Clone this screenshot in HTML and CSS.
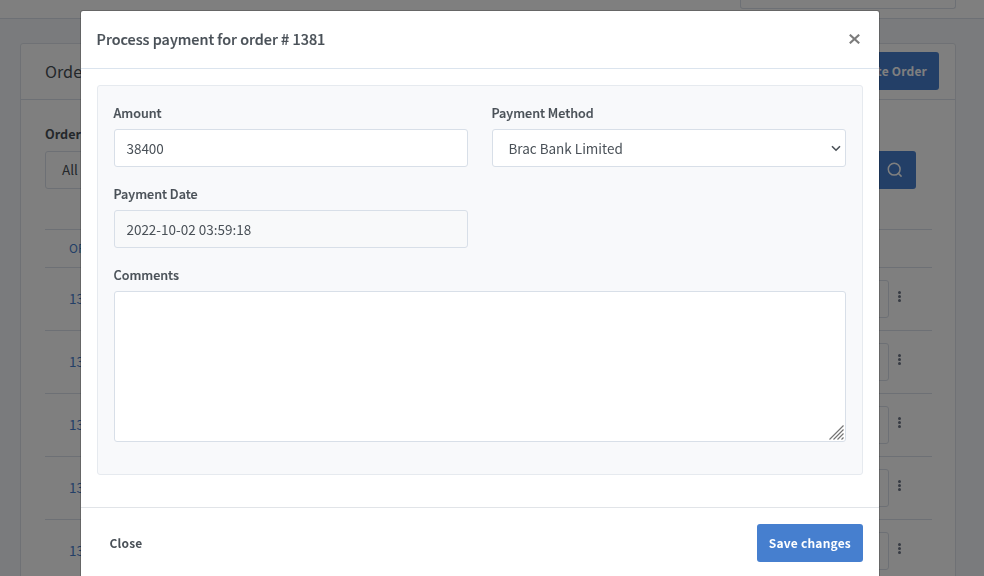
FILE: index.html
```html
<!DOCTYPE html>
<html lang="en">
<head>
<meta charset="utf-8">
<title>Orders</title>
<link rel="stylesheet" href="styles.css">
</head>
<body>
<div class="page">
  <header class="topbar"><div class="topbar-search"></div></header>
  <main class="card">
    <div class="card-header"><h3 class="card-title">Orders</h3><button class="btn btn-primary create">Create Order</button></div>
    <div class="card-body">
      <div class="filter-label">Order Status</div>
      <div class="filters">
        <div class="filter-select">All</div>
        <button class="btn btn-primary search" aria-label="Search"><svg width="16" height="16" viewBox="0 0 16 16" fill="none" stroke="currentColor" stroke-width="1.5" stroke-linecap="round"><circle cx="7.2" cy="7.2" r="5.9"/><path d="M11.5 11.5l2.6 2.6"/></svg></button>
      </div>
      <div class="table">
        <div class="table-head">ORDER</div>
        <div class="row"><a>1381</a><span class="row-btn"></span><span class="dots"><i></i><i></i><i></i></span></div>
        <div class="row"><a>1380</a><span class="row-btn"></span><span class="dots"><i></i><i></i><i></i></span></div>
        <div class="row"><a>1379</a><span class="row-btn"></span><span class="dots"><i></i><i></i><i></i></span></div>
        <div class="row"><a>1378</a><span class="row-btn"></span><span class="dots"><i></i><i></i><i></i></span></div>
        <div class="row"><a>1377</a><span class="row-btn"></span><span class="dots"><i></i><i></i><i></i></span></div>
      </div>
    </div>
  </main>
</div>
<div class="backdrop">
  <div class="modal">
    <div class="modal-header">
      <h5 class="modal-title">Process payment for order # 1381</h5>
      <button class="modal-close" aria-label="Close"><svg width="11" height="10" viewBox="0 0 11 10" fill="none" stroke="currentColor" stroke-width="2.1"><path d="M.8.7l9.4 8.6M10.2.7L.8 9.3"/></svg></button>
    </div>
    <div class="modal-body">
      <div class="fieldset">
        <div class="group"><label>Amount</label><div class="control">38400</div></div>
        <div class="group"><label>Payment Method</label><div class="control select"><span>Brac Bank Limited</span><svg width="10" height="7" viewBox="0 0 10 7" fill="none" stroke="currentColor" stroke-width="1.6"><path d="M1 1.2l4 4 4-4"/></svg></div></div>
        <div class="group"><label>Payment Date</label><div class="control readonly">2022-10-02 03:59:18</div></div>
        <div class="group wide"><label>Comments</label><div class="control comments"><svg width="15" height="15" viewBox="0 0 15 15" fill="none" stroke="#747474" stroke-width="1.2"><path d="M.5 14.5l14-14M4.5 14.5l10-10M8.5 14.5l6-6M12.5 14.5l2-2"/></svg></div></div>
      </div>
    </div>
    <div class="modal-footer"><button class="btn btn-link">Close</button><button class="btn btn-primary">Save changes</button></div>
  </div>
</div>
</body>
</html>
```
FILE: styles.css
```css
* { box-sizing: border-box; }
body {
  margin: 0;
  height: 576px;
  overflow: hidden;
  background: #f5f7fb;
  color: #495057;
  font: 400 13.5px/22px "Noto Sans CJK SC", "Noto Sans", sans-serif;
}
h3, h5 { margin: 0; }
.page { height: 576px; overflow: hidden; }
.topbar {
  height: 19px;
  padding-right: 28px;
  display: flex;
  justify-content: flex-end;
  background: #fff;
  border-bottom: 1px solid #dbe1ea;
}
.topbar-search {
  width: 216px;
  height: 9px;
  border: 1px solid #dbe1ea;
  border-top: 0;
  border-radius: 0 0 3px 3px;
}
.card {
  margin: 24px 28px 0 20px;
  height: 700px;
  background: #fff;
  border: 1px solid #dfe3ea;
  border-radius: 3px;
}
.card-header {
  height: 56px;
  padding: 0 16px 1px 24px;
  display: flex;
  align-items: center;
  justify-content: space-between;
  border-bottom: 1px solid #dbe1ea;
}
.card-title { font-size: 16.2px; font-weight: 400; line-height: 24px; }
.card-body { padding: 23px 23px 0 24px; }
.btn {
  height: 38px;
  padding: 0 12px;
  display: inline-flex;
  align-items: center;
  border: 0;
  border-radius: 3px;
  font: 700 12px/20px "Noto Sans CJK SC", "Noto Sans", sans-serif;
  letter-spacing: .2px;
}
.btn-primary { background: #467fcf; color: #fff; }
.btn-link { background: transparent; color: #495057; padding-left: 12.5px; }
.filter-label { height: 28px; font-size: 12.6px; font-weight: 700; }
.filters { display: flex; justify-content: space-between; padding-right: 16px; }
.filter-select {
  width: 200px;
  height: 38px;
  padding: 7px 16px;
  line-height: 20px;
  border: 1px solid #dbe1ea;
  border-radius: 3px;
}
.search { padding: 0 13px; }
.search svg { margin-top: -1px; }
.table { margin-top: 40px; border-top: 1px solid #dbe1ea; }
.table-head {
  height: 37px;
  padding: 7px 24px;
  color: #467fcf;
  font-size: 12px;
}
.row {
  height: 63px;
  padding: 0 30px 0 24px;
  display: flex;
  align-items: center;
  border-top: 1px solid #dbe1ea;
  color: #467fcf;
}
.row a { padding-bottom: 2px; }
.row-btn {
  width: 100px;
  height: 38px;
  margin-left: auto;
  border: 1px solid #dbe1ea;
  border-radius: 3px;
}
.dots { margin: -5px 1px 0 9px; display: flex; flex-direction: column; gap: 1.4px; }
.dots i { width: 3px; height: 3px; border-radius: 50%; background: #6e7687; }
.backdrop {
  position: fixed;
  inset: 0;
  padding: 10px 104px 0 80px;
  background: rgba(0, 0, 0, .5);
}
.modal {
  width: 800px;
  height: 590px;
  background: #fff;
  background-clip: padding-box;
  border: 1px solid rgba(0, 0, 0, .2);
  border-radius: 3px;
}
.modal-header {
  height: 58px;
  padding: 0 19px 2px 15.6px;
  display: flex;
  align-items: center;
  justify-content: space-between;
  border-bottom: 1px solid #dbe4ee;
}
.modal-title {
  font-size: 14.4px;
  font-weight: 500;
  line-height: 24px;
  -webkit-text-stroke: .2px currentColor;
}
.modal-close { padding: 0; border: 0; background: none; color: #7c7c7c; display: flex; }
.modal-body { padding: 16px 16px 32px; }
.fieldset {
  height: 390px;
  padding: 16px;
  display: grid;
  grid-template-columns: 354px 354px;
  grid-template-rows: 81px 81px auto;
  column-gap: 24px;
  background: #f8f9fb;
  border: 1px solid #e6eaef;
  border-radius: 3px;
}
.group label {
  display: block;
  height: 27px;
  margin-left: -.5px;
  font-size: 12.6px;
  font-weight: 500;
  -webkit-text-stroke: .2px currentColor;
}
.wide { grid-column: 1 / -1; }
.group:nth-child(3) { grid-column: 1; }
.control {
  height: 38px;
  padding: 7px 11.4px;
  background: #fff;
  border: 1px solid #d8dfe8;
  border-radius: 3px;
}
.select { padding: 7px 4px 7px 15.4px; display: flex; justify-content: space-between; align-items: center; }
.readonly { background: #f8f9fa; }
.comments { height: 151px; padding: 1px; display: flex; justify-content: flex-end; align-items: flex-end; }
.modal-footer {
  padding: 16px;
  display: flex;
  justify-content: space-between;
  border-top: 1px solid #e1e4e8;
}
```
